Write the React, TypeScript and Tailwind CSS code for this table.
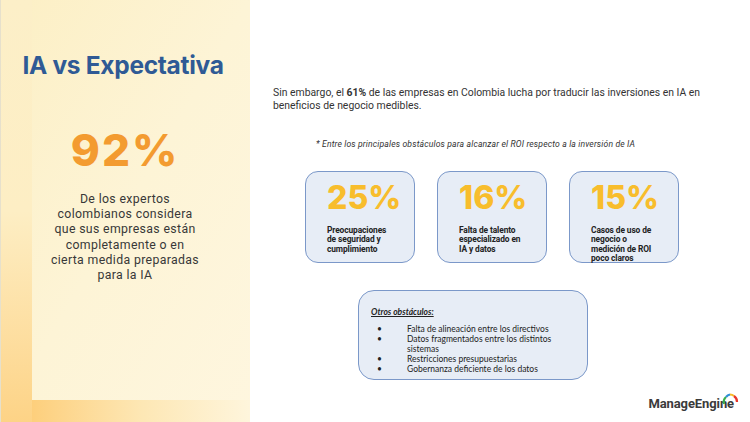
import React from "react";

const boxes = [
  { pct: "25%", lines: ["Preocupaciones", "de seguridad y", "cumplimiento"] },
  { pct: "16%", lines: ["Falta de talento", "especializado en", "IA y datos"] },
  { pct: "15%", lines: ["Casos de uso de", "negocio o", "medición de ROI", "poco claros"] },
];

function Logo() {
  return (
    <div className="relative flex items-end">
      <span
        className="text-[13px] font-bold tracking-[-0.1px] text-[#3b3b3b]"
        style={{ fontFamily: "Roboto, 'Liberation Sans', sans-serif" }}
      >
        ManageEngine
      </span>
      <svg className="absolute right-[-5px] top-[-3px]" width="18" height="14" viewBox="0 0 18 14">
        <path d="M3 13 A7 7 0 0 1 5 6" stroke="#3cae4a" strokeWidth="2.2" fill="none" />
        <path d="M5 6 A7 7 0 0 1 9 3.5" stroke="#2f8fd6" strokeWidth="2.2" fill="none" />
        <path d="M9 3.5 A7 7 0 0 1 13 5" stroke="#f7b926" strokeWidth="2.2" fill="none" />
        <path d="M13 5 A7 7 0 0 1 16 11" stroke="#e8352b" strokeWidth="2.2" fill="none" />
      </svg>
    </div>
  );
}

export default function App() {
  return (
    <div className="flex h-[422px] w-[750px] overflow-hidden bg-white" style={{ fontFamily: "Inter, sans-serif" }}>
      {/* Left panel */}
      <div className="relative h-full w-[250px] bg-gradient-to-br from-[#fcefc4] via-[#fdf4d6] to-[#fef6df]">
        <div className="absolute left-0 top-0 h-full w-[32px] border-l border-[#e6e0cc] bg-gradient-to-b from-[#fcefc8] via-[#fdeec4] to-[#fdd386]" />
        <div className="absolute bottom-0 left-[32px] h-[22px] w-[218px] bg-gradient-to-r from-[#fdcf7c] via-[#fde7b4] to-[#fef5dc]" />
        <div className="relative flex h-full flex-col items-center">
          <div className="ml-[-4px] mt-[51px] text-[24.5px] font-bold leading-[28px] tracking-[-0.3px] text-[#2f5a95]">
            IA vs Expectativa
          </div>
          <div className="mt-[48px] text-[44px] font-extrabold leading-[46px] tracking-[2px] text-[#f39b30]">
            92%
          </div>
          <div
            className="mt-[19px] w-[210px] text-center text-[12.3px] leading-[15.2px] tracking-[0.35px] text-[#383838]"
            style={{ fontFamily: "Roboto, sans-serif" }}
          >
            De los expertos
            <br />
            colombianos considera
            <br />
            que sus empresas están
            <br />
            completamente o en
            <br />
            cierta medida preparadas
            <br />
            para la IA
          </div>
        </div>
      </div>

      {/* Right content */}
      <div className="flex flex-1 flex-col" style={{ fontFamily: "Roboto, 'Liberation Sans', sans-serif" }}>
        <p className="ml-[23px] mt-[87px] w-[470px] text-[10.4px] leading-[12.5px] text-[#333]">
          Sin embargo, el <span className="font-bold">61%</span> de las empresas en Colombia lucha por traducir las inversiones en IA en
          <br />
          beneficios de negocio medibles.
        </p>
        <p className="ml-[66px] mt-[27px] text-[8.6px] italic leading-[10px] tracking-[0.15px] text-[#333]">
          * Entre los principales obstáculos para alcanzar el ROI respecto a la inversión de IA
        </p>

        <div className="ml-[55px] mt-[22px] flex gap-[22px]">
          {boxes.map((b) => (
            <div
              key={b.pct}
              className="flex h-[92px] w-[110px] flex-col rounded-[13px] border-[1.5px] border-[#7b98c9] bg-[#e7edf6] pl-[21px] pt-[9px]"
            >
              <div
                className="text-[32px] font-extrabold leading-[34px] text-[#f8bd2c]"
                style={{ fontFamily: "Inter, sans-serif" }}
              >
                {b.pct}
              </div>
              <div className="mt-[11px] text-[8.4px] font-bold leading-[9.3px] tracking-[-0.1px] text-[#222]">
                {b.lines.map((l) => (
                  <div key={l}>{l}</div>
                ))}
              </div>
            </div>
          ))}
        </div>

        <div
          className="ml-[108px] mt-[27px] flex h-[90px] w-[230px] flex-col rounded-[16px] border-[1.5px] border-[#7b98c9] bg-[#e7edf6] pl-[12px] pt-[16px]"
          style={{ fontFamily: "Lato, sans-serif" }}
        >
          <div className="text-[8.5px] font-bold italic leading-[10px] text-[#222] underline">Otros obstáculos:</div>
          <ul className="mt-[7px] text-[8.5px] leading-[10px] text-[#222]">
            {[
              ["Falta de alineación entre los directivos"],
              ["Datos fragmentados entre los distintos", "sistemas"],
              ["Restricciones presupuestarias"],
              ["Gobernanza deficiente de los datos"],
            ].map((lines) => (
              <li key={lines[0]} className="flex">
                <span className="w-[36px] pl-[6px]">•</span>
                <span>
                  {lines.map((l) => (
                    <div key={l}>{l}</div>
                  ))}
                </span>
              </li>
            ))}
          </ul>
        </div>

        <div className="mr-[16px] mt-[14px] flex justify-end">
          <Logo />
        </div>
      </div>
    </div>
  );
}
